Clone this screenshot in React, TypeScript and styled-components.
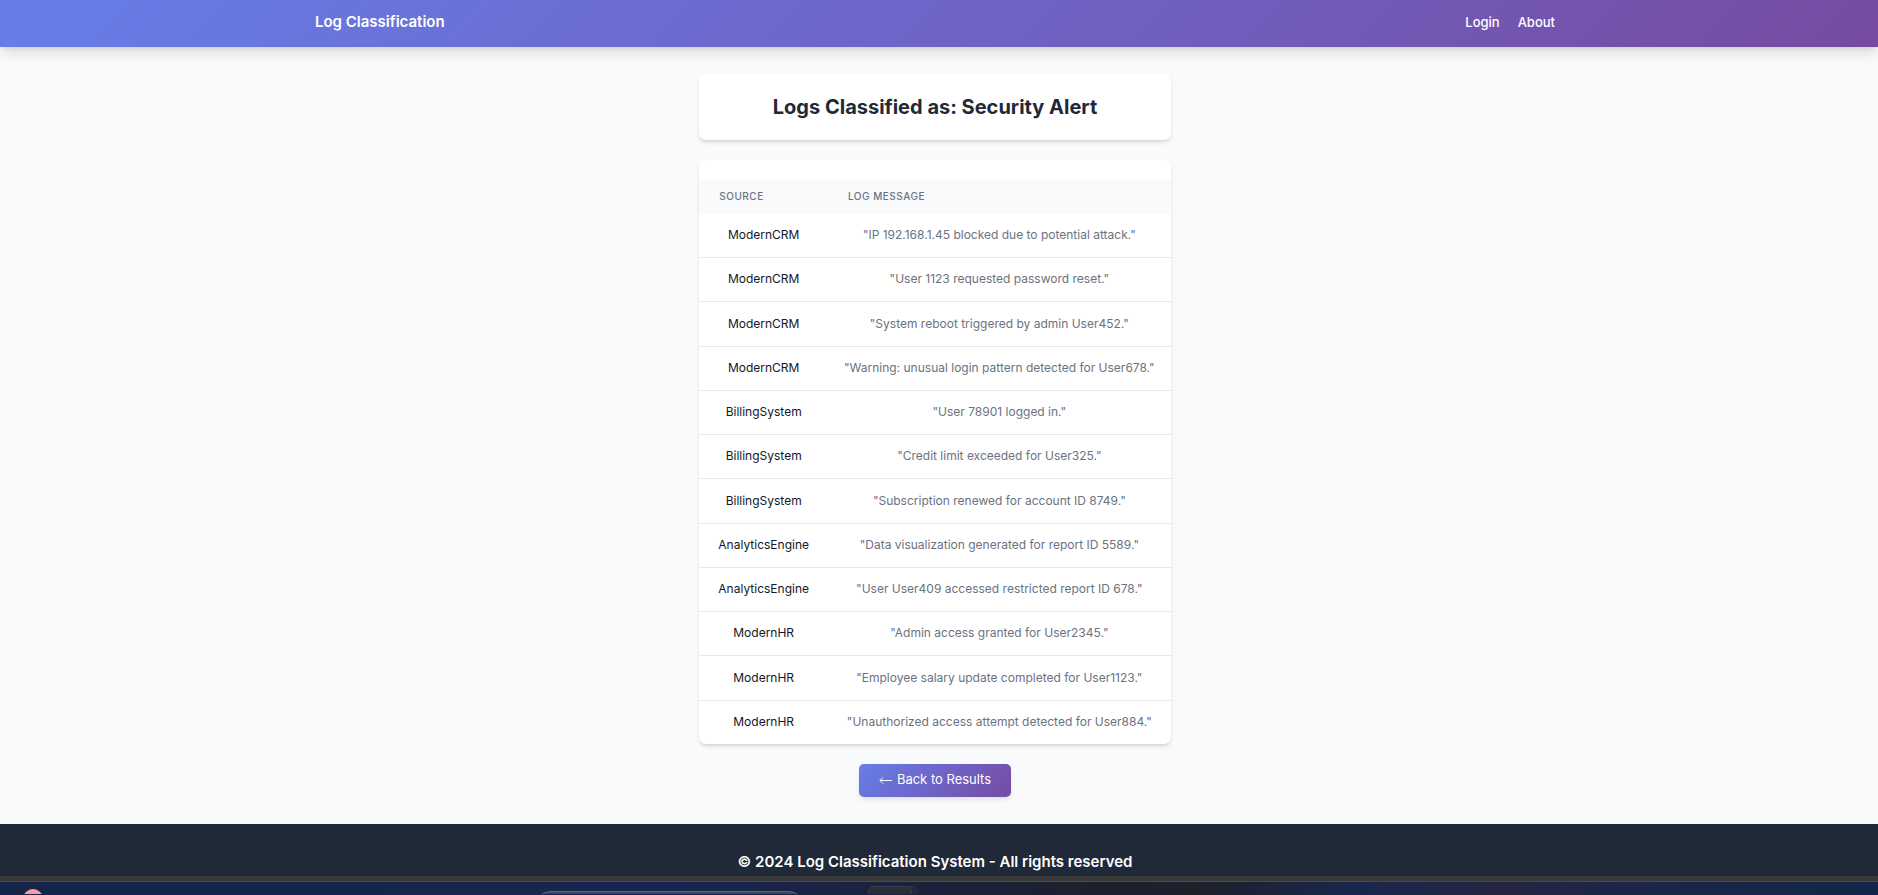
import React from "react";
import styled, { createGlobalStyle } from "styled-components";

const GlobalStyle = createGlobalStyle`
  *, *::before, *::after { box-sizing: border-box; }
  body {
    margin: 0;
    background: #f9fafc;
    color: #1f2937;
    font-family: Inter, "Liberation Sans", sans-serif;
    font-size: 13px;
    line-height: 20px;
  }
`;

const brandGradient = "linear-gradient(135deg, #667eea 0%, #764ba2 100%)";

const Page = styled.div`
  min-height: 100vh;
  display: flex;
  flex-direction: column;
  overflow: hidden;
`;

const Header = styled.header`
  background: ${brandGradient};
  box-shadow: 0 8px 12px -2px rgba(0, 0, 0, 0.12), 0 3px 5px -2px rgba(0, 0, 0, 0.08);
  padding: 10px 8px 13px 0;
`;

const HeaderInner = styled.div`
  max-width: 1280px;
  margin: 0 auto;
  padding: 0 20px;
  display: flex;
  align-items: center;
  justify-content: space-between;
  line-height: 24px;
`;

const Brand = styled.a`
  color: #fff;
  font-size: 15px;
  font-weight: 600;
  text-decoration: none;
`;

const Nav = styled.nav`
  display: flex;
  gap: 18px;
`;

const NavLink = styled.a`
  color: #fff;
  font-size: 13px;
  font-weight: 500;
  text-decoration: none;
`;

const Main = styled.main`
  display: flex;
  flex-direction: column;
  align-items: center;
  padding: 27px 8px 27px 0;
`;

const Column = styled.div`
  display: flex;
  flex-direction: column;
  gap: 20px;
`;

const Card = styled.section`
  background: #fff;
  border-radius: 7px;
  box-shadow: 0 3px 5px -1px rgba(0, 0, 0, 0.12), 0 2px 3px -1px rgba(0, 0, 0, 0.08);
`;

const TitleCard = styled(Card)`
  padding: 20px;
  text-align: center;
`;

const Title = styled.h1`
  margin: 0;
  font-size: 20px;
  line-height: 26px;
  font-weight: 700;
`;

const TableCard = styled(Card)`
  padding-top: 20px;
  overflow: hidden;
`;

const Table = styled.table`
  width: 100%;
  height: 564px;
  border-collapse: collapse;
`;

const HeadCell = styled.th`
  background: #f9fafc;
  color: #6b7280;
  padding: 9px 20px 11px;
  font-size: 10px;
  line-height: 14px;
  font-weight: 500;
  letter-spacing: 0.05em;
  text-align: left;
  text-transform: uppercase;
`;

const Row = styled.tr`
  & + & {
    border-top: 1px solid #e5e7eb;
  }
`;

const Cell = styled.td`
  padding: 13px 19px 14px;
  color: #111827;
  font-size: 12px;
  line-height: 16px;
  text-align: center;
  white-space: nowrap;
`;

const MessageCell = styled(Cell)`
  padding: 13px 16px 14px;
  color: #6b7280;
`;

const BackLink = styled.a`
  align-self: center;
  display: flex;
  align-items: center;
  gap: 4px;
  padding: 5px 20px 8px;
  border-radius: 5px;
  background: ${brandGradient};
  box-shadow: 0 3px 5px -1px rgba(0, 0, 0, 0.12);
  color: #fff;
  font-size: 13px;
  text-decoration: none;
`;

const Arrow = styled.svg`
  width: 14px;
  height: 14px;
  fill: none;
  stroke: currentColor;
`;

const Footer = styled.footer`
  background: #1f2937;
  color: #fff;
  padding: 27px 8px 4px 0;
  font-size: 15px;
  line-height: 21px;
  font-weight: 600;
  text-align: center;
`;

const Taskbar = styled.div`
  flex: 1;
  border-top: 5px solid #3a3939;
  background: linear-gradient(90deg, #15254a 0%, #182551 36%, #1c2030 56%, #1d212b 64%, #19274d 72%, #242541 80%, #1c2648 86%, #14264a 100%);
`;

const TaskbarArt = styled.svg`
  display: block;
  height: 13px;
  width: 1000px;
`;

const TaskbarEdge = styled.div`
  margin-bottom: -1px;
  height: 1px;
  background: #464a5a;
`;

const logs: [string, string][] = [
  ["ModernCRM", "IP 192.168.1.45 blocked due to potential attack."],
  ["ModernCRM", "User 1123 requested password reset."],
  ["ModernCRM", "System reboot triggered by admin User452."],
  ["ModernCRM", "Warning: unusual login pattern detected for User678."],
  ["BillingSystem", "User 78901 logged in."],
  ["BillingSystem", "Credit limit exceeded for User325."],
  ["BillingSystem", "Subscription renewed for account ID 8749."],
  ["AnalyticsEngine", "Data visualization generated for report ID 5589."],
  ["AnalyticsEngine", "User User409 accessed restricted report ID 678."],
  ["ModernHR", "Admin access granted for User2345."],
  ["ModernHR", "Employee salary update completed for User1123."],
  ["ModernHR", "Unauthorized access attempt detected for User884."],
];

export default function App() {
  return (
    <Page>
      <GlobalStyle />
      <Header>
        <HeaderInner>
          <Brand href="#">Log Classification</Brand>
          <Nav>
            <NavLink href="#login">Login</NavLink>
            <NavLink href="#about">About</NavLink>
          </Nav>
        </HeaderInner>
      </Header>
      <Main>
        <Column>
          <TitleCard>
            <Title>Logs Classified as: Security Alert</Title>
          </TitleCard>
          <TableCard>
            <Table>
              <thead>
                <tr>
                  <HeadCell scope="col">Source</HeadCell>
                  <HeadCell scope="col">Log Message</HeadCell>
                </tr>
              </thead>
              <tbody>
                {logs.map(([source, message]) => (
                  <Row key={message}>
                    <Cell>{source}</Cell>
                    <MessageCell>{`"${message}"`}</MessageCell>
                  </Row>
                ))}
              </tbody>
            </Table>
          </TableCard>
          <BackLink href="#results">
            <Arrow viewBox="0 0 14 14" aria-hidden="true">
              <path d="M13 8.5H1M4 5.5L1 8.5L4 11.5" />
            </Arrow>
            Back to Results
          </BackLink>
        </Column>
      </Main>
      <Footer>© 2024 Log Classification System - All rights reserved</Footer>
      <Taskbar>
        <TaskbarEdge />
        <TaskbarArt viewBox="0 0 1000 13" aria-hidden="true">
          <circle cx="33" cy="18" r="10" fill="#ff9aa5" />
          <rect x="534" y="10.5" width="271" height="34" rx="17" fill="#3a4566" stroke="#59658a" />
          <rect x="874" y="5.5" width="43" height="34" rx="6" fill="#232734" stroke="#30343f" />
          <rect x="868.5" y="5.5" width="43" height="34" rx="5" fill="#2a2e3c" stroke="#3a3e4c" />
        </TaskbarArt>
      </Taskbar>
    </Page>
  );
}
